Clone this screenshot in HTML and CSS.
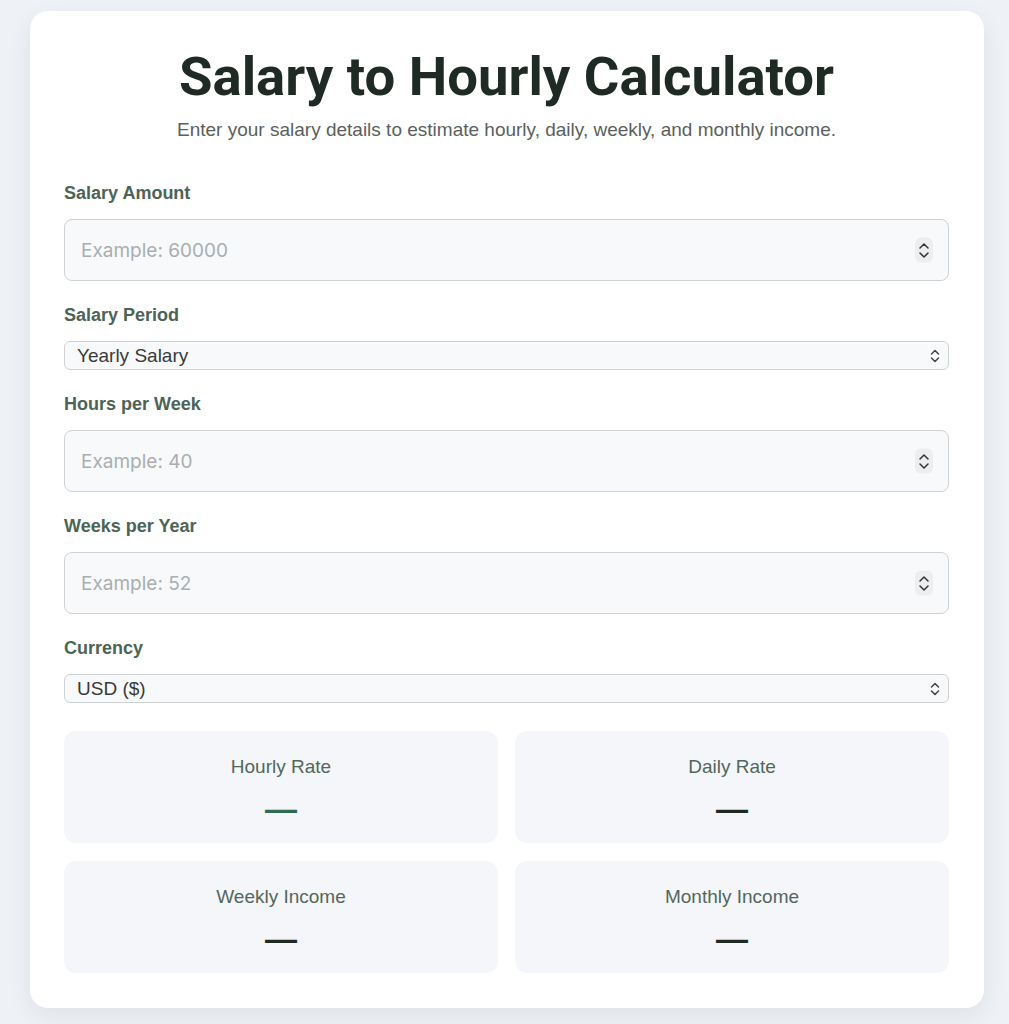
FILE: index.html
```html
<!DOCTYPE html>
<html lang="en">
<head>
    <meta charset="UTF-8">
    <meta name="viewport" content="width=device-width, initial-scale=1.0">
    <title>Salary to Hourly Calculator</title>
    <link rel="stylesheet" href="styles.css">
</head>
<body>
    <div class="calculator">
        <h1>Salary to Hourly Calculator</h1>
        <p class="subtitle">Enter your salary details to estimate hourly, daily, weekly, and monthly income.</p>

        <form id="salary-form">
            <label for="salary">Salary Amount</label>
            <div class="field">
                <input type="number" id="salary" class="num-input" placeholder="Example: 60000">
                <span class="spinner">
                    <svg width="12" height="20" viewBox="0 0 12 20"><path d="M2 7.5 6 3.5 10 7.5M2 12.5 6 16.5 10 12.5" fill="none" stroke="#333" stroke-width="1.5" stroke-linecap="round" stroke-linejoin="round"/></svg>
                </span>
            </div>

            <label for="period">Salary Period</label>
            <div class="field">
                <select id="period" class="select-input">
                    <option value="yearly">Yearly Salary</option>
                    <option value="monthly">Monthly Salary</option>
                    <option value="weekly">Weekly Salary</option>
                </select>
                <span class="select-arrow">
                    <svg width="10" height="16" viewBox="0 0 10 16"><path d="M1.5 6 5 2.5 8.5 6M1.5 10 5 13.5 8.5 10" fill="none" stroke="#444" stroke-width="1.5" stroke-linecap="round" stroke-linejoin="round"/></svg>
                </span>
            </div>

            <label for="hours">Hours per Week</label>
            <div class="field">
                <input type="number" id="hours" class="num-input" placeholder="Example: 40">
                <span class="spinner">
                    <svg width="12" height="20" viewBox="0 0 12 20"><path d="M2 7.5 6 3.5 10 7.5M2 12.5 6 16.5 10 12.5" fill="none" stroke="#333" stroke-width="1.5" stroke-linecap="round" stroke-linejoin="round"/></svg>
                </span>
            </div>

            <label for="weeks">Weeks per Year</label>
            <div class="field">
                <input type="number" id="weeks" class="num-input" placeholder="Example: 52">
                <span class="spinner">
                    <svg width="12" height="20" viewBox="0 0 12 20"><path d="M2 7.5 6 3.5 10 7.5M2 12.5 6 16.5 10 12.5" fill="none" stroke="#333" stroke-width="1.5" stroke-linecap="round" stroke-linejoin="round"/></svg>
                </span>
            </div>

            <label for="currency">Currency</label>
            <div class="field">
                <select id="currency" class="select-input">
                    <option value="USD">USD ($)</option>
                    <option value="EUR">EUR (€)</option>
                    <option value="GBP">GBP (£)</option>
                </select>
                <span class="select-arrow">
                    <svg width="10" height="16" viewBox="0 0 10 16"><path d="M1.5 6 5 2.5 8.5 6M1.5 10 5 13.5 8.5 10" fill="none" stroke="#444" stroke-width="1.5" stroke-linecap="round" stroke-linejoin="round"/></svg>
                </span>
            </div>
        </form>

        <div class="results">
            <div class="result-box">
                <div class="result-label">Hourly Rate</div>
                <div class="result-value highlight" id="hourly">—</div>
            </div>
            <div class="result-box">
                <div class="result-label">Daily Rate</div>
                <div class="result-value" id="daily">—</div>
            </div>
            <div class="result-box">
                <div class="result-label">Weekly Income</div>
                <div class="result-value" id="weekly">—</div>
            </div>
            <div class="result-box">
                <div class="result-label">Monthly Income</div>
                <div class="result-value" id="monthly">—</div>
            </div>
        </div>
    </div>
</body>
</html>
```

FILE: styles.css
```css
body {
    margin: 0;
    padding: 11px 25px 16px 30px;
    font-family: "Liberation Sans", Arial, sans-serif;
    background-color: #eef1f5;
    color: #1f2a24;
}
.calculator {
    background: #fff;
    border-radius: 18px;
    padding: 32px 35px 35px 34px;
    box-shadow: 0 8px 24px rgba(30, 40, 60, 0.07);
}
h1 {
    margin: 0;
    text-align: center;
    font-family: Roboto, "Liberation Sans", sans-serif;
    font-weight: 700;
    font-size: 54.5px;
    letter-spacing: 0;
    line-height: 66px;
    color: #1f2a24;
}
.subtitle {
    margin: 10px 0 42px;
    text-align: center;
    font-size: 19px;
    line-height: 22px;
    color: #5b5f5d;
}
label {
    display: block;
    font-size: 18px;
    font-weight: 700;
    color: #4c6456;
    line-height: 20px;
    margin-bottom: 16px;
}
.field {
    position: relative;
    margin-bottom: 24px;
}
.num-input {
    display: block;
    box-sizing: border-box;
    width: 100%;
    height: 62px;
    padding: 0 16px;
    border: 1.5px solid #cfd2d4;
    border-radius: 8px;
    background: #f8f9fa;
    font-family: Inter, "Liberation Sans", sans-serif;
    font-size: 19px;
    color: #333;
    -moz-appearance: textfield;
}
.num-input::placeholder {
    color: #a9aeb1;
}
.num-input::-webkit-inner-spin-button,
.num-input::-webkit-outer-spin-button {
    -webkit-appearance: none;
    margin: 0;
}
.spinner {
    position: absolute;
    right: 16px;
    top: 50%;
    transform: translateY(-50%);
    width: 18px;
    height: 25px;
    border-radius: 6px;
    background: #eceef0;
    display: flex;
    align-items: center;
    justify-content: center;
    pointer-events: none;
}
.select-input {
    display: block;
    box-sizing: border-box;
    width: 100%;
    height: 29px;
    padding: 0 30px 0 12px;
    border: 1.5px solid #cfd2d4;
    border-radius: 6px;
    background: #f8f9fa;
    font-family: "Liberation Sans", Arial, sans-serif;
    font-size: 19px;
    color: #3a3a3a;
    -webkit-appearance: none;
    appearance: none;
}
.select-arrow {
    position: absolute;
    right: 9px;
    top: 50%;
    transform: translateY(-50%);
    display: flex;
    pointer-events: none;
}
#salary-form .field:last-child {
    margin-bottom: 28px;
}
.results {
    display: grid;
    grid-template-columns: 1fr 1fr;
    column-gap: 17px;
    row-gap: 18px;
}
.result-box {
    background: #f4f6f9;
    border-radius: 12px;
    height: 112px;
    box-sizing: border-box;
    padding-top: 25px;
    text-align: center;
}
.result-label {
    font-size: 19px;
    color: #52675b;
    line-height: 22px;
}
.result-value {
    margin-top: 13px;
    font-size: 32px;
    font-weight: 700;
    line-height: 36px;
    color: #1f2a24;
}
.result-value.highlight {
    color: #2f6b4f;
}
```
